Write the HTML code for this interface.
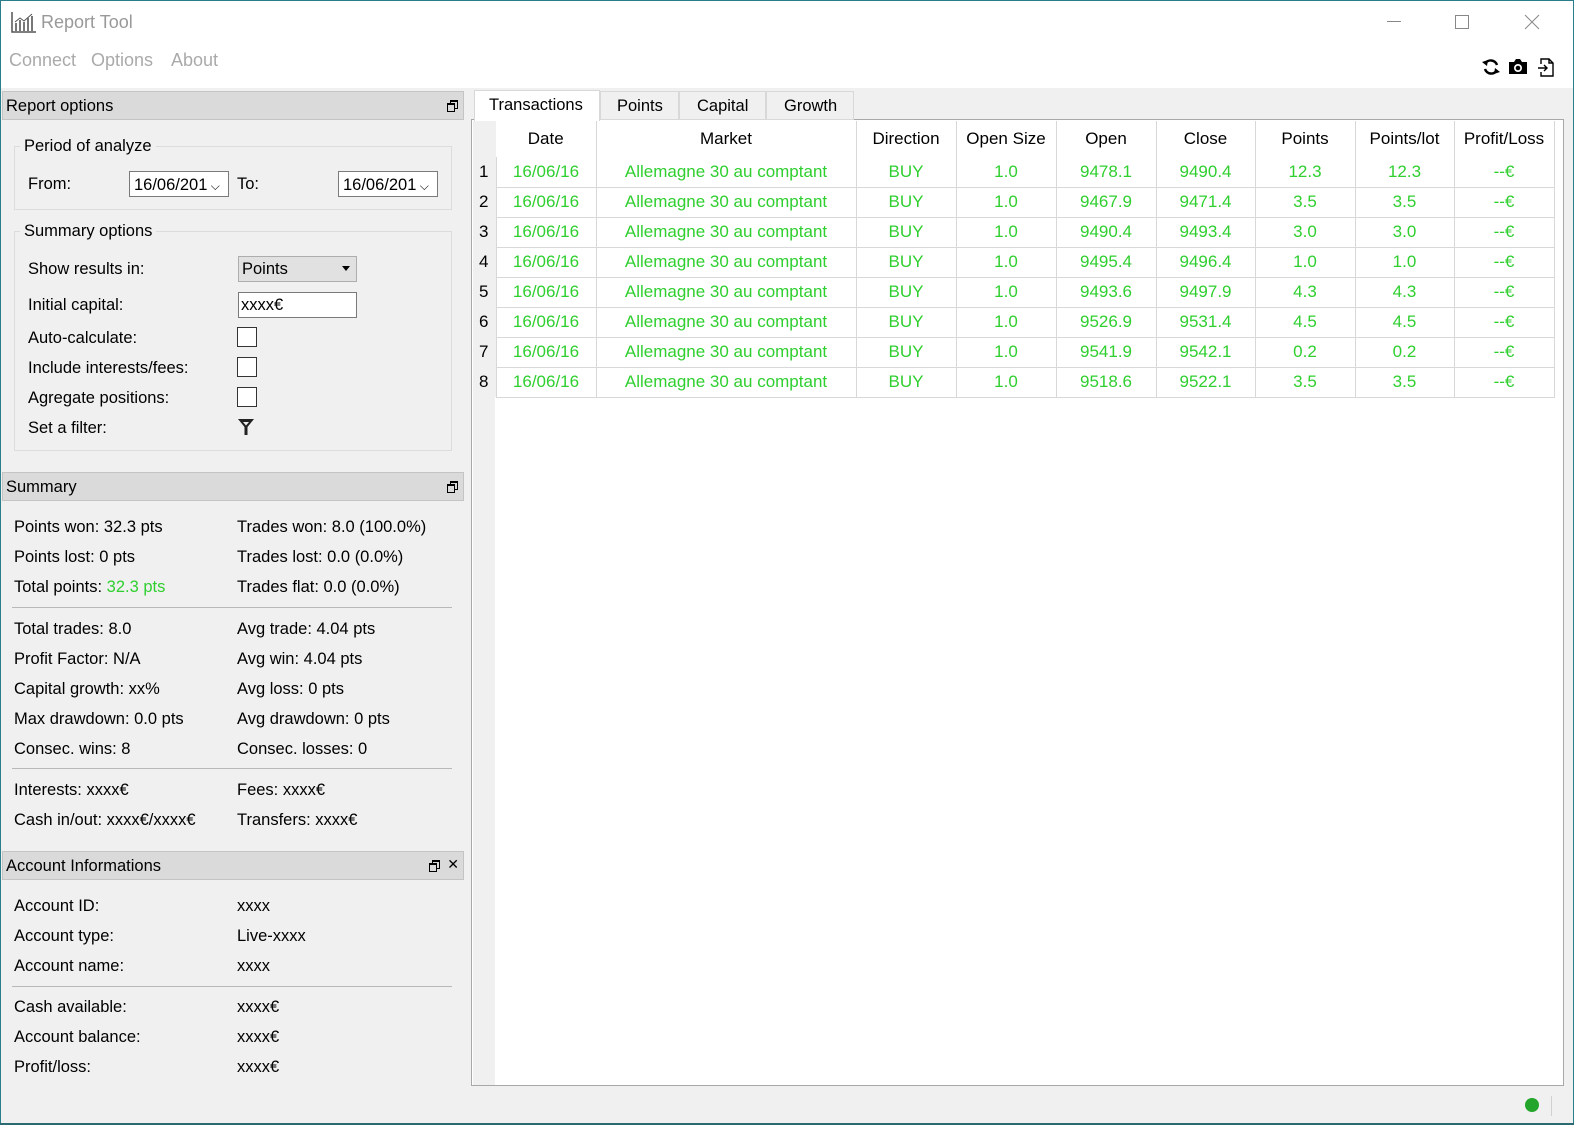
<!DOCTYPE html>
<html><head><meta charset="utf-8"><style>
*{margin:0;padding:0;box-sizing:border-box}
body{width:1574px;height:1125px;position:relative;background:#f0f0f0;font-family:"Liberation Sans",sans-serif;font-size:16.5px;color:#000;overflow:hidden}
.a{position:absolute;white-space:nowrap}
.g{color:#2fcf2f}
.hdr{position:absolute;left:2px;width:462px;height:29px;background:#dadada;border:1px solid #c4c4c4;padding:5px 3px}
.fl{position:absolute;right:6px;top:8px;width:10px;height:10px}
.fl:before{content:"";position:absolute;left:3px;top:0;width:6px;height:6px;border:1px solid #000;border-top-width:2px}
.fl:after{content:"";position:absolute;left:0;top:3px;width:6px;height:6px;border:1px solid #000;border-top-width:2px;background:#dadada}
.gb{position:absolute;border:1px solid #dcdcdc}
.cb{position:absolute;left:237px;width:20px;height:20px;border:1px solid #333;background:#fff}
.sep{position:absolute;left:12px;width:440px;height:1px;background:#b8b8b8}
table{border-collapse:collapse;position:absolute;left:473px;top:121px}
td{height:30px;border-right:1px solid #d8d8d8;border-bottom:1px solid #d8d8d8;text-align:center;font-size:17px;color:#2fcf2f;background:#fff;padding:0}
td.n{color:#000;width:23px;background:#f0f0f0;text-align:left;padding-left:6px;border-bottom:none}
th{height:36px;font-weight:normal;font-size:17px;border-right:1px solid #d8d8d8;background:#fff}
th.n{background:#f0f0f0;border-right:none}
</style></head><body>
<div class="a" style="left:0;top:0;width:1574px;height:88px;background:#fff;border:1px solid #2a7d8a;border-bottom:none"></div>
<div class="a" style="left:0;top:0;width:1px;height:1125px;background:#2a7d8a"></div>
<div class="a" style="left:1573px;top:0;width:1px;height:1125px;background:#2a7d8a"></div>
<svg class="a" style="left:11px;top:10px" width="26" height="24"><path d="M1 2V22H25" stroke="#555" stroke-width="1.5" fill="none"/><g stroke="#777" stroke-width="2"><path d="M5 21V13M9 21V10M13 21V12M17 21V8M21 21V6"/></g><path d="M4 12L9 8 13 11 21 4" stroke="#555" fill="none"/></svg>
<div class="a" style="left:41px;top:12px;font-size:18px;color:#999">Report Tool</div>
<div class="a" style="left:9px;top:50px;font-size:18px;color:#aaa">Connect</div>
<div class="a" style="left:91px;top:50px;font-size:18px;color:#aaa">Options</div>
<div class="a" style="left:171px;top:50px;font-size:18px;color:#aaa">About</div>
<div class="a" style="left:1387px;top:21px;width:14px;height:1px;background:#888"></div>
<div class="a" style="left:1455px;top:15px;width:14px;height:14px;border:1px solid #888"></div>
<svg class="a" style="left:1524px;top:14px" width="16" height="16"><path d="M1 1L15 15M15 1L1 15" stroke="#888"/></svg>
<svg class="a" style="left:1481px;top:57px" width="20" height="20" viewBox="0 0 20 20"><path d="M16 8A6.5 6.5 0 0 0 4 7M4 12A6.5 6.5 0 0 0 16 13" stroke="#000" stroke-width="2.5" fill="none"/><path d="M1 5L6 9 7 3ZM19 15L14 11 13 17Z" fill="#000"/></svg>
<svg class="a" style="left:1508px;top:58px" width="20" height="17"><path d="M1 4H6L8 1H12L14 4H19V16H1Z" fill="#000"/><circle cx="10" cy="10" r="4" fill="#fff"/><circle cx="10" cy="10" r="2.3" fill="#000"/></svg>
<svg class="a" style="left:1537px;top:58px" width="18" height="19"><path d="M4 6V1H12L16 5V18H4V14M12 1V5H16" stroke="#000" stroke-width="1.4" fill="none"/><path d="M1 10H10M7 7L10 10 7 13" stroke="#000" stroke-width="1.4" fill="none"/></svg>

<div class="hdr" style="top:91px">Report options<div class="fl"></div></div>
<div class="gb" style="left:14px;top:146px;width:438px;height:64px"></div>
<div class="a" style="left:20px;top:137px;background:#f0f0f0;padding:0 4px">Period of analyze</div>
<div class="a" style="left:28px;top:175px">From:</div>
<div class="a" style="left:129px;top:171px;width:100px;height:26px;background:#fff;border:1px solid #7a7a7a;padding:4px 4px">16/06/201<span style="font-size:12px"> ⌵</span></div>
<div class="a" style="left:237px;top:175px">To:</div>
<div class="a" style="left:338px;top:171px;width:100px;height:26px;background:#fff;border:1px solid #7a7a7a;padding:4px 4px">16/06/201<span style="font-size:12px"> ⌵</span></div>
<div class="gb" style="left:14px;top:231px;width:438px;height:220px"></div>
<div class="a" style="left:20px;top:222px;background:#f0f0f0;padding:0 4px">Summary options</div>
<div class="a" style="left:28px;top:260px">Show results in:</div>
<div class="a" style="left:238px;top:256px;width:119px;height:26px;background:#e1e1e1;border:1px solid #adadad;padding:3px 3px">Points<span style="position:absolute;right:6px;top:9px;border:4px solid transparent;border-top:5px solid #000"></span></div>
<div class="a" style="left:28px;top:296px">Initial capital:</div>
<div class="a" style="left:238px;top:292px;width:119px;height:26px;background:#fff;border:1px solid #7a7a7a;padding:3px 2px">xxxx€</div>
<div class="a" style="left:28px;top:329px">Auto-calculate:</div><div class="cb" style="top:327px"></div>
<div class="a" style="left:28px;top:359px">Include interests/fees:</div><div class="cb" style="top:357px"></div>
<div class="a" style="left:28px;top:389px">Agregate positions:</div><div class="cb" style="top:387px"></div>
<div class="a" style="left:28px;top:419px">Set a filter:</div>
<svg class="a" style="left:238px;top:419px" width="16" height="16"><path d="M0 0H16L9.5 8V16H6.5V8Z" fill="#222"/><path d="M5 3H11L8 6.5Z" fill="#f0f0f0"/></svg>

<div class="hdr" style="top:472px">Summary<div class="fl"></div></div>
<div class="a" style="left:14px;top:518px">Points won: 32.3 pts</div><div class="a" style="left:237px;top:518px">Trades won: 8.0 (100.0%)</div>
<div class="a" style="left:14px;top:548px">Points lost: 0 pts</div><div class="a" style="left:237px;top:548px">Trades lost: 0.0 (0.0%)</div>
<div class="a" style="left:14px;top:578px">Total points: <span class="g">32.3 pts</span></div><div class="a" style="left:237px;top:578px">Trades flat: 0.0 (0.0%)</div>
<div class="sep" style="top:607px"></div>
<div class="a" style="left:14px;top:620px">Total trades: 8.0</div><div class="a" style="left:237px;top:620px">Avg trade: 4.04 pts</div>
<div class="a" style="left:14px;top:650px">Profit Factor: N/A</div><div class="a" style="left:237px;top:650px">Avg win: 4.04 pts</div>
<div class="a" style="left:14px;top:680px">Capital growth: xx%</div><div class="a" style="left:237px;top:680px">Avg loss: 0 pts</div>
<div class="a" style="left:14px;top:710px">Max drawdown: 0.0 pts</div><div class="a" style="left:237px;top:710px">Avg drawdown: 0 pts</div>
<div class="a" style="left:14px;top:740px">Consec. wins: 8</div><div class="a" style="left:237px;top:740px">Consec. losses: 0</div>
<div class="sep" style="top:768px"></div>
<div class="a" style="left:14px;top:781px">Interests: xxxx€</div><div class="a" style="left:237px;top:781px">Fees: xxxx€</div>
<div class="a" style="left:14px;top:811px">Cash in/out: xxxx€/xxxx€</div><div class="a" style="left:237px;top:811px">Transfers: xxxx€</div>

<div class="hdr" style="top:851px">Account Informations<div class="fl" style="right:24px"></div><span style="position:absolute;right:4px;top:4px;font-size:14px">✕</span></div>
<div class="a" style="left:14px;top:897px">Account ID:</div><div class="a" style="left:237px;top:897px">xxxx</div>
<div class="a" style="left:14px;top:927px">Account type:</div><div class="a" style="left:237px;top:927px">Live-xxxx</div>
<div class="a" style="left:14px;top:957px">Account name:</div><div class="a" style="left:237px;top:957px">xxxx</div>
<div class="sep" style="top:986px"></div>
<div class="a" style="left:14px;top:998px">Cash available:</div><div class="a" style="left:237px;top:998px">xxxx€</div>
<div class="a" style="left:14px;top:1028px">Account balance:</div><div class="a" style="left:237px;top:1028px">xxxx€</div>
<div class="a" style="left:14px;top:1058px">Profit/loss:</div><div class="a" style="left:237px;top:1058px">xxxx€</div>

<div class="a" style="left:471px;top:119px;width:1093px;height:967px;background:#fff;border:1px solid #a8a8a8"></div>
<div class="a" style="left:473px;top:121px;width:22px;height:964px;background:#f0f0f0"></div>
<div class="a" style="left:474px;top:90px;width:126px;height:31px;background:#fff;border:1px solid #d8d8d8;border-bottom:none;padding:5px 0 0 14px">Transactions</div>
<div class="a" style="left:600px;top:91px;width:79px;height:29px;background:#f0f0f0;border:1px solid #d8d8d8;padding:5px 0 0 16px">Points</div>
<div class="a" style="left:679px;top:91px;width:87px;height:29px;background:#f0f0f0;border:1px solid #d8d8d8;padding:5px 0 0 17px">Capital</div>
<div class="a" style="left:766px;top:91px;width:88px;height:29px;background:#f0f0f0;border:1px solid #d8d8d8;padding:5px 0 0 17px">Growth</div>
<table>
<tr><th class="n" style="width:23px"></th><th style="width:100px">Date</th><th style="width:260px">Market</th><th style="width:100px">Direction</th><th style="width:100px">Open Size</th><th style="width:100px">Open</th><th style="width:99px">Close</th><th style="width:100px">Points</th><th style="width:99px">Points/lot</th><th style="width:100px">Profit/Loss</th></tr>
<tr><td class="n">1</td><td>16/06/16</td><td>Allemagne 30 au comptant</td><td>BUY</td><td>1.0</td><td>9478.1</td><td>9490.4</td><td>12.3</td><td>12.3</td><td>--€</td></tr>
<tr><td class="n">2</td><td>16/06/16</td><td>Allemagne 30 au comptant</td><td>BUY</td><td>1.0</td><td>9467.9</td><td>9471.4</td><td>3.5</td><td>3.5</td><td>--€</td></tr>
<tr><td class="n">3</td><td>16/06/16</td><td>Allemagne 30 au comptant</td><td>BUY</td><td>1.0</td><td>9490.4</td><td>9493.4</td><td>3.0</td><td>3.0</td><td>--€</td></tr>
<tr><td class="n">4</td><td>16/06/16</td><td>Allemagne 30 au comptant</td><td>BUY</td><td>1.0</td><td>9495.4</td><td>9496.4</td><td>1.0</td><td>1.0</td><td>--€</td></tr>
<tr><td class="n">5</td><td>16/06/16</td><td>Allemagne 30 au comptant</td><td>BUY</td><td>1.0</td><td>9493.6</td><td>9497.9</td><td>4.3</td><td>4.3</td><td>--€</td></tr>
<tr><td class="n">6</td><td>16/06/16</td><td>Allemagne 30 au comptant</td><td>BUY</td><td>1.0</td><td>9526.9</td><td>9531.4</td><td>4.5</td><td>4.5</td><td>--€</td></tr>
<tr><td class="n">7</td><td>16/06/16</td><td>Allemagne 30 au comptant</td><td>BUY</td><td>1.0</td><td>9541.9</td><td>9542.1</td><td>0.2</td><td>0.2</td><td>--€</td></tr>
<tr><td class="n">8</td><td>16/06/16</td><td>Allemagne 30 au comptant</td><td>BUY</td><td>1.0</td><td>9518.6</td><td>9522.1</td><td>3.5</td><td>3.5</td><td>--€</td></tr>
</table>
<div class="a" style="left:1525px;top:1098px;width:14px;height:14px;border-radius:50%;background:#22a52a"></div>
<div class="a" style="left:1551px;top:1096px;width:1px;height:20px;background:#d0d0d0"></div>
<div class="a" style="left:0;top:1123px;width:1574px;height:2px;background:#2a6a70"></div>
</body></html>
